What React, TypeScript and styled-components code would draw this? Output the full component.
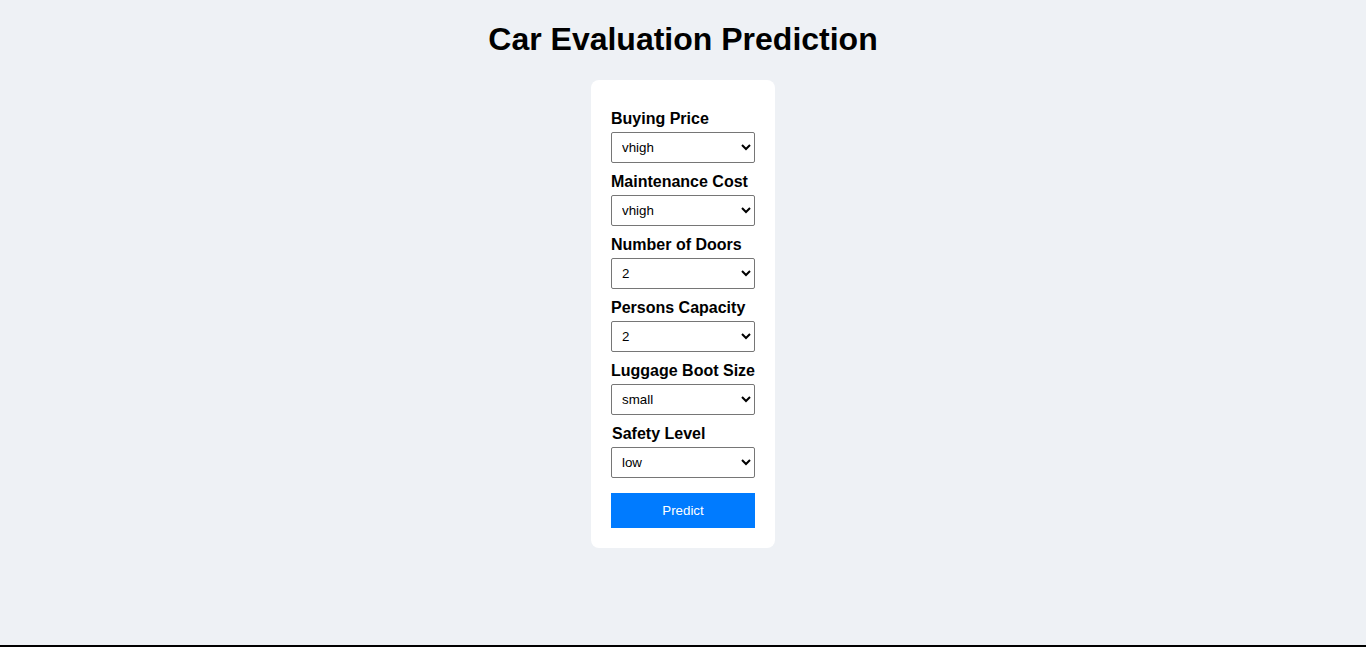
import React from "react";
import styled, { createGlobalStyle } from "styled-components";

const GlobalStyle = createGlobalStyle`
  html, body {
    margin: 0;
    padding: 0;
    background: #000;
  }
  body {
    font-family: "Liberation Sans", Arial, sans-serif;
  }
`;

const Page = styled.div`
  min-height: calc(100vh - 2px);
  background: #eef1f5;
  display: flex;
  flex-direction: column;
  align-items: center;
  padding-top: 21px;
  box-sizing: border-box;
`;

const Title = styled.h1`
  margin: 0 0 22px;
  font-size: 32px;
  font-weight: bold;
  color: #000;
  line-height: 37px;
`;

const Card = styled.form`
  width: 184px;
  box-sizing: border-box;
  background: #fff;
  border-radius: 8px;
  padding: 20px;
  display: flex;
  flex-direction: column;
`;

const Label = styled.label<{ $indent?: number }>`
  display: block;
  margin-top: 10px;
  margin-bottom: 4px;
  padding-left: ${(p) => p.$indent ?? 0}px;
  font-size: 16px;
  font-weight: bold;
  line-height: 18px;
  color: #000;
  white-space: nowrap;
`;

const Select = styled.select`
  width: 144px;
  height: 31px;
  box-sizing: border-box;
  border: 1px solid #767676;
  border-radius: 2px;
  background: #fff;
  color: #000;
  font-family: "Liberation Sans", Arial, sans-serif;
  font-size: 13.33px;
  padding: 0 6px;
`;

const Button = styled.button`
  margin-top: 15px;
  width: 144px;
  height: 35px;
  border: none;
  background: #007bff;
  color: #fff;
  font-family: "Liberation Sans", Arial, sans-serif;
  font-size: 13.33px;
  cursor: pointer;
`;

const fields: { label: string; options: string[]; indent?: number }[] = [
  { label: "Buying Price", options: ["vhigh", "high", "med", "low"] },
  { label: "Maintenance Cost", options: ["vhigh", "high", "med", "low"] },
  { label: "Number of Doors", options: ["2", "3", "4", "5more"] },
  { label: "Persons Capacity", options: ["2", "4", "more"] },
  { label: "Luggage Boot Size", options: ["small", "med", "big"] },
  { label: "Safety Level", options: ["low", "med", "high"], indent: 1 },
];

export default function App() {
  return (
    <>
      <GlobalStyle />
      <Page>
        <Title>Car Evaluation Prediction</Title>
        <Card onSubmit={(e) => e.preventDefault()}>
          {fields.map((f) => (
            <React.Fragment key={f.label}>
              <Label $indent={f.indent}>{f.label}</Label>
              <Select defaultValue={f.options[0]}>
                {f.options.map((o) => (
                  <option key={o} value={o}>
                    {o}
                  </option>
                ))}
              </Select>
            </React.Fragment>
          ))}
          <Button type="submit">Predict</Button>
        </Card>
      </Page>
    </>
  );
}
